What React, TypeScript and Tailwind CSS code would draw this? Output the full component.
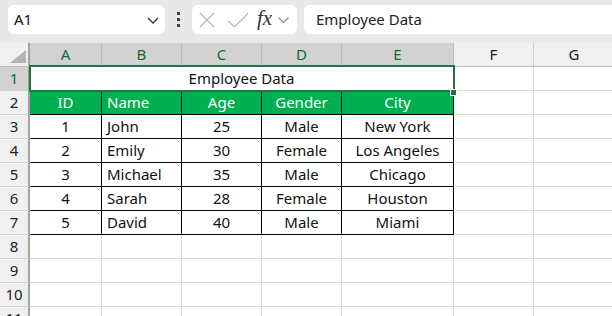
import React from "react";

const font = { fontFamily: '"Noto Sans", "Liberation Sans", sans-serif' };

const cols = ["A", "B", "C", "D", "E", "F", "G"];
const data = [
  ["1", "John", "25", "Male", "New York"],
  ["2", "Emily", "30", "Female", "Los Angeles"],
  ["3", "Michael", "35", "Male", "Chicago"],
  ["4", "Sarah", "28", "Female", "Houston"],
  ["5", "David", "40", "Male", "Miami"],
];

function RowHeader({ n, selected }: { n: number; selected?: boolean }) {
  return (
    <div
      className={
        "h-[24px] flex items-center justify-center border-r-2 border-r-[#a3a3a3] border-b border-b-[#d0d0d0] text-[15px] " +
        (selected ? "bg-[#d2d2d2] text-[#0f6b37]" : "bg-[#f0f0f0] text-[#222222]")
      }
    >
      {n}
    </div>
  );
}

function Blank({ last }: { last?: boolean }) {
  return <div className={"h-[24px] border-b border-b-[#dadada] " + (last ? "" : "border-r border-r-[#dadada]")} />;
}

export default function App() {
  return (
    <div className="w-[612px] h-[316px] overflow-hidden bg-white text-[#111]" style={font}>
      {/* Top bar */}
      <div className="h-[43px] bg-[#e8e8e8] flex items-start pt-[5px] pl-[8px] overflow-hidden">
        <div className="shrink-0 w-[157px] h-[29px] bg-white rounded-[6px] flex items-center pl-[6px] pr-[5px] justify-between">
          <span className="text-[15px] text-[#111]">A1</span>
          <svg width="14" height="10" viewBox="0 0 14 10">
            <path d="M2 3 L7 8 L12 3" fill="none" stroke="#333" strokeWidth="1.3" />
          </svg>
        </div>
        <div className="shrink-0 w-[27px] h-[29px] flex flex-col items-center justify-center gap-[3px]">
          <div className="w-[3px] h-[3px] bg-[#444]" />
          <div className="w-[3px] h-[3px] bg-[#444]" />
          <div className="w-[3px] h-[3px] bg-[#444]" />
        </div>
        <div className="shrink-0 w-[105px] h-[29px] bg-white rounded-[6px] flex items-center pl-[7px]">
          <svg width="16" height="16" viewBox="0 0 16 16" className="shrink-0">
            <path d="M1 1 L15 15 M15 1 L1 15" stroke="#b8b8b8" strokeWidth="1.2" fill="none" />
          </svg>
          <svg width="22" height="16" viewBox="0 0 22 16" className="shrink-0 ml-[12px]">
            <path d="M1 9 L7.5 15 L21 1.5" stroke="#b8b8b8" strokeWidth="1.2" fill="none" />
          </svg>
          <span
            className="shrink-0 ml-[8px] text-[21px] italic text-[#333] leading-none pb-[2px]"
            style={{ fontFamily: '"Liberation Serif", "DejaVu Serif", serif' }}
          >
            fx
          </span>
          <svg width="13" height="8" viewBox="0 0 13 8" className="shrink-0 ml-[5px]">
            <path d="M1.5 1.5 L6.5 6.5 L11.5 1.5" fill="none" stroke="#888" strokeWidth="1.1" />
          </svg>
        </div>
        <div className="shrink-0 ml-[7px] w-[330px] h-[29px] bg-white rounded-[6px] flex items-center pl-[12px]">
          <span className="text-[15px] text-[#222]">Employee Data</span>
        </div>
      </div>

      {/* Grid */}
      <div className="relative grid grid-cols-[30px_72px_80px_80px_80px_112px_80px_80px]">
        {/* Header row */}
        <div className="h-[24px] bg-[#f0f0f0] border-r-2 border-r-[#a3a3a3] border-b border-b-[#bdbdbd] relative">
          <svg width="16" height="13" viewBox="0 0 16 13" className="absolute right-[2px] bottom-[3px]">
            <path d="M16 0 L16 13 L0 13 Z" fill="#b4b4b4" />
          </svg>
        </div>
        {cols.map((c, i) => (
          <div
            key={c}
            className={
              "h-[24px] flex items-center justify-center text-[15px] border-b " +
              (i < 5
                ? "bg-[#d2d2d2] text-[#0f6b37] border-b-[#217346] border-r border-r-[#bdbdbd]"
                : "bg-[#f0f0f0] text-[#1a1a1a] border-b-[#bdbdbd] " + (i < 6 ? "border-r border-r-[#cfcfcf]" : ""))
            }
          >
            {c}
          </div>
        ))}

        {/* Row 1 */}
        <RowHeader n={1} selected />
        <div className="col-span-5 h-[24px] flex items-center justify-center text-[15px] border-b border-b-black border-r border-r-[#dadada]">
          Employee Data
        </div>
        <Blank />
        <Blank last />

        {/* Row 2 */}
        <RowHeader n={2} />
        {["ID", "Name", "Age", "Gender", "City"].map((h, i) => (
          <div
            key={h}
            className={
              "h-[24px] bg-[#00b050] text-white text-[15px] flex items-center border-b border-b-black border-r border-r-black " +
              (i === 1 ? "justify-start pl-[5px]" : "justify-center")
            }
          >
            {h}
          </div>
        ))}
        <Blank />
        <Blank last />

        {data.map((row, r) => (
          <React.Fragment key={r}>
            <RowHeader n={r + 3} />
            {row.map((v, i) => (
              <div
                key={i}
                className={
                  "h-[24px] text-[15px] flex items-center border-b border-b-black border-r border-r-black " +
                  (i === 1 ? "justify-start pl-[5px]" : "justify-center")
                }
              >
                {v}
              </div>
            ))}
            <Blank />
            <Blank last />
          </React.Fragment>
        ))}

        {[8, 9, 10, 11].map((n) => (
          <React.Fragment key={n}>
            <RowHeader n={n} />
            <Blank />
            <Blank />
            <Blank />
            <Blank />
            <Blank />
            <Blank />
            <Blank last />
          </React.Fragment>
        ))}

        {/* Selection overlay */}
        <div className="absolute left-[29px] top-[22px] w-[426px] h-[27px] border-2 border-[#217346] pointer-events-none" />
        <div className="absolute left-[450px] top-[46px] w-[7px] h-[7px] bg-[#217346] border border-white pointer-events-none" />
      </div>
    </div>
  );
}
